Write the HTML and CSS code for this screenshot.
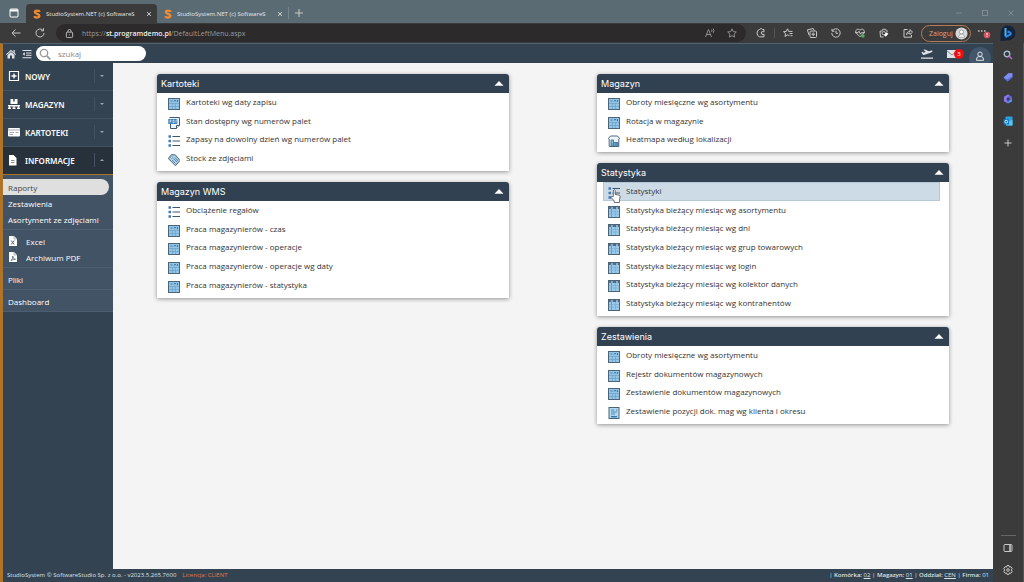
FILE: index.html
```html
<!DOCTYPE html>
<html lang="pl">
<head>
<meta charset="utf-8">
<title>StudioSystem.NET (c) SoftwareStudio</title>
<link rel="stylesheet" href="styles.css">
</head>
<body>
<svg class="sprite" aria-hidden="true">
  <symbol id="logo" viewBox="0 0 10 12"><path d="M8.500 3.200C7.800 1.200 2.200 1 2.200 3.600S8 5.500 8 8.300 2.500 11 1.400 8.700" fill="none" stroke="#f08a34" stroke-width="2.800"/></symbol>
  <symbol id="grid" viewBox="0 0 12 12"><rect x=".5" y=".5" width="11" height="11" fill="#93c5e8" stroke="#4b6478"/><path d="M2.500 3h2M6 3.500l1-1.500 1 1.500M9.500 2v2" stroke="#31648c" fill="none" stroke-width=".8"/><path d="M1 5.500h10M1 8.500h10M4.500 5v6M7.500 5v6" stroke="#6e9fc4" stroke-width=".7"/></symbol>
  <symbol id="table" viewBox="0 0 12 12"><rect x=".5" y=".5" width="11" height="11" fill="#99c9ea" stroke="#4b6478"/><path d="M1 2h10" stroke="#4a6f8e" stroke-width="2"/><path d="M3 2h2M8 2h2" stroke="#d9edf9"/><path d="M3.500 3v8" stroke="#6890b0" stroke-width=".8"/><path d="M1 5.500h10M1 8h10M7.500 3v8" stroke="#79a8ca" stroke-width=".6"/></symbol>
  <symbol id="list" viewBox="0 0 12 12"><path d="M.5 1.500h2.500M.5 6h2.500M.5 10.500h2.500" stroke="#3f79b4" stroke-width="2.500"/><path d="M4.500 1.500H12M4.500 6H12M4.500 10.500H12" stroke="#40566c" stroke-width="1"/></symbol>
  <symbol id="pdf" viewBox="0 0 12 12"><path d="M1.500 .5h10v8l-3 3h-6V7" fill="#e9f3fa" stroke="#42596c"/><path d="M8.500 11.500v-3h3" fill="#fff" stroke="#42596c"/><rect x=".3" y="2" width="9" height="5" fill="#3f7fb8"/><path d="M2 6V3h1v1.500H2M5 3v3h1V3zM8 6V3h1.500" fill="none" stroke="#e5f3ff" stroke-width=".6"/></symbol>
  <symbol id="tag" viewBox="0 0 12 12"><path d="M.2 4.500L3.500.5l4 .5L12 6.500 7.500 11.700z" fill="#a9cfe9" stroke="#42596c" stroke-width=".9"/><path d="M4 6l3.500 3.500M5.500 4.500L9 8M7 3.500L10 7" stroke="#456f91" stroke-width=".7"/><circle cx="3.500" cy="3.500" r=".9" fill="#fff" stroke="#42596c" stroke-width=".5"/></symbol>
  <symbol id="house" viewBox="0 0 12 12"><path d="M1.200 11.500V4L.3 3.500 2.500 1h7l2.200 2.500-.9.500v7.500z" fill="#eef6fb" stroke="#42596c" stroke-width=".9"/><path d="M3 11V5h2.500v2.500H10V11z" fill="#8fc0e2" stroke="#31648c" stroke-width=".8"/><path d="M5.500 7.500V11M8 7.500V11M3 9h7" stroke="#31648c" stroke-width=".6"/></symbol>
  <symbol id="report" viewBox="0 0 12 12"><rect x="1" y=".5" width="10" height="11" fill="#b3daf2" stroke="#4b6478"/><path d="M3 3h3.500M3 5h6M3 7h4M8 3h1.500" stroke="#39749f" stroke-width=".8"/><path d="M3 9.700h6" stroke="#397bb0" stroke-width="1.500"/></symbol>
  <symbol id="file" viewBox="0 0 8 10"><path d="M0 0h5l3 3v7H0z" fill="#fff"/><path d="M5 0v3h3" fill="none" stroke="#7b8b9a" stroke-width=".6"/></symbol>
  <symbol id="up" viewBox="0 0 10 5"><path d="M5 0l4.500 4.700H.5z" fill="currentColor"/></symbol>
</svg>

<div class="browser">
  <div class="tabstrip">
    <button class="tool workspace" aria-label="Karty"><svg viewBox="0 0 10 10"><rect x="1" y="1" width="8" height="8" rx="1"/><path d="M1 2.500h8" stroke-width="2"/></svg></button>
    <button class="tab active"><svg class="logo"><use href="#logo"/></svg><span class="tab-title">StudioSystem.NET (c) SoftwareS</span><svg class="close" viewBox="0 0 6 6"><path d="M1 1l4 4M5 1L1 5"/></svg></button>
    <button class="tab"><svg class="logo"><use href="#logo"/></svg><span class="tab-title">StudioSystem.NET (c) SoftwareS</span><svg class="close" viewBox="0 0 6 6"><path d="M1 1l4 4M5 1L1 5"/></svg></button>
    <button class="tool newtab" aria-label="Nowa karta"><svg viewBox="0 0 10 10"><path d="M5 1v8M1 5h8"/></svg></button>
    <div class="window-controls">
      <button class="tool" aria-label="Minimalizuj"><svg viewBox="0 0 10 10"><path d="M2 5h6"/></svg></button>
      <button class="tool" aria-label="Maksymalizuj"><svg viewBox="0 0 10 10"><rect x="2.500" y="2.500" width="5" height="5"/></svg></button>
      <button class="tool" aria-label="Zamknij"><svg viewBox="0 0 10 10"><path d="M2.500 2.500l5 5M7.500 2.500l-5 5"/></svg></button>
    </div>
  </div>

  <div class="toolbar">
    <button class="tool" aria-label="Wstecz"><svg viewBox="0 0 10 10"><path d="M9.500 5H1M4.500 1.500L1 5l3.500 3.500"/></svg></button>
    <button class="tool" aria-label="Odśwież"><svg viewBox="0 0 10 10"><path d="M9 5a4 4 0 1 1-1.200-2.900M8.500.3v2.500H6"/></svg></button>
    <div class="address">
      <svg class="lock" viewBox="0 0 10 10"><rect x="1.500" y="3.500" width="7" height="6" rx="1"/><path d="M3.300 3.500V2.200a1.700 1.700 0 0 1 3.400 0v1.300M5 6v1"/></svg>
      <span class="url">https://<b>st.programdemo.pl</b>/DefaultLeftMenu.aspx</span>
      <button class="tool dim" aria-label="Czytaj na głos"><svg viewBox="0 0 10 10"><path d="M.5 9L3.500 1.500 6.500 9M1.500 6.500h4M6.500 1.500q1 1.300 0 2.500M8.200.5q1.500 2.200 0 4.300"/></svg></button>
      <button class="tool dim" aria-label="Dodaj do ulubionych"><svg viewBox="0 0 10 10"><path d="M5 .8l1.300 2.800 3 .4-2.200 2.100.5 3L5 7.700 2.400 9.100l.5-3L.7 4l3-.4z"/></svg></button>
    </div>
    <button class="tool" aria-label="Rozszerzenia"><svg viewBox="0 0 10 10"><path d="M8 3V1.500H6.500A1.700 1.700 0 0 0 3.500 1.500Q1 2 1 5t2.500 3.800H8V7M8.500 3.700H7a1.400 1.400 0 1 0 0 2.700h1.500"/></svg></button>
    <span class="sep"></span>
    <button class="tool" aria-label="Ulubione"><svg viewBox="0 0 10 10"><path d="M6.500 7.700L4.500 6.900 2 8.500l.6-2.900L.5 3.700l2.800-.3L4.500.8l1.200 2.600H9.500M6.500 5.500h3M7.500 7.700h2"/></svg></button>
    <button class="tool" aria-label="Kolekcje"><svg viewBox="0 0 10 10"><path d="M2 7L.7 3 .5 1.800 6.300.5 7 2.300"/><rect x="3" y="3" width="6.500" height="6.500" rx="1"/><path d="M6.200 4.500v3.500M4.500 6.200H8"/></svg></button>
    <button class="tool" aria-label="Historia"><svg viewBox="0 0 10 10"><path d="M1.300 3A4.200 4.200 0 1 1 .8 5M1 .8v2.400h2.400M5 2.700V5.300h2"/></svg></button>
    <button class="tool" aria-label="Wydajność"><svg viewBox="0 0 10 10"><path d="M5 8.800L1 4.800C-.3 2 3-.2 5 2.200 7-.2 10.300 2 9 4.800z"/><path d="M0 4.700h3l1-1.500 1.500 3 .8-1.500H10"/><circle cx="8" cy="8" r="1.700" fill="#4cae68" stroke="none"/></svg></button>
    <button class="tool" aria-label="Zrzut"><svg viewBox="0 0 10 10"><path d="M4.500 9H1.500L1 3.200 3 3l.7-1.700h3L7.300 3l1.700.2"/><circle cx="4.800" cy="5.200" r="1.700"/><path d="M6 8l2.500-3" stroke="#fff" stroke-width="2.200"/></svg></button>
    <button class="tool" aria-label="Udostępnij"><svg viewBox="0 0 10 10"><path d="M4.500 1.500H1v7.700h7.500V7M3.500 6.700C3.700 4.300 5 3.500 7 3.500V1.500l2.500 2.700L7 6.500V5C5.500 5 4.500 5.500 3.500 6.700z"/></svg></button>
    <button class="login">Zaloguj<svg viewBox="0 0 14 14"><circle cx="7" cy="7" r="6.500" fill="#d9d9d9"/><circle cx="7" cy="5.300" r="2.200" fill="#fff" stroke="#888" stroke-width=".8"/><path d="M3.500 11q0-3 3.500-3t3.500 3z" fill="#fff" stroke="#888" stroke-width=".7"/></svg></button>
    <button class="tool more" aria-label="Więcej"><svg viewBox="0 0 14 12"><path d="M1 4h1.500M4 4h1.500M7 4h1.500" stroke-width="1.300"/><circle cx="10" cy="8" r="3.300" fill="#d05260" stroke="none"/><path d="M10 6v2.300M10 9.200v.8" stroke="#fff"/></svg></button>
    <button class="tool bing" aria-label="Bing"><svg viewBox="0 0 16 16"><path d="M.5 16V8A7.500 7.500 0 1 1 8 15.500z" fill="#14233a" stroke="none"/><path d="M5.500 3v8.500" stroke="#45b5f2" stroke-width="2"/><path d="M5.500 12l5-2.500q1-1.500-1-2.300L7.500 6.500" stroke="#2a86ea" stroke-width="2"/></svg></button>
  </div>

  <div class="workarea">
    <div class="app">
      <header class="topbar">
        <a href="#" class="top-icon" aria-label="Start"><svg viewBox="0 0 10 10"><path d="M0 5.300L5 .8l5 4.500-.7.7L5 2.200.7 6z"/><path d="M7.500 1h1.300v3L7.500 2.800zM1.500 6L5 3l3.500 3v3.500H6V6.500H4v3H1.500z"/></svg></a>
        <a href="#" class="top-icon" aria-label="Menu"><svg viewBox="0 0 10 10"><path d="M.5 1h9v1h-9zM4 3.500h5.500v1H4zM4 5.800h5.500v1H4zM.5 8.200h9v1h-9zM.5 5l2.300-1.800v3.600z"/></svg></a>
        <label class="search"><svg viewBox="0 0 12 12"><circle cx="5" cy="5" r="3.700"/><path d="M7.800 7.800l3.500 3.500" stroke-width="1.800"/></svg><input type="text" placeholder="szukaj" aria-label="szukaj"></label>
        <div class="top-actions">
          <a href="#" class="top-icon plane" aria-label="Odloty"><svg viewBox="0 0 12 10"><path d="M0 8.500h12v1.200H0zM.5 3l1-.3 1.200 1 2-.7L2.500.8 3.800.4l4 1.900 2.500-.8q1.500 0 1.200.9Q10.500 3.500 8 4.300L3 6q-1 .2-1.500-.7z"/></svg></a>
          <a href="#" class="top-icon mail" aria-label="Wiadomości"><svg viewBox="0 0 10 8"><path d="M0 0h10v8H0z"/><path d="M0 1l5 4 5-4" fill="none" stroke="#65737f" stroke-width=".8"/></svg><span class="badge">3</span></a>
          <a href="#" class="avatar" aria-label="Konto"><svg viewBox="0 0 10 10"><circle cx="5" cy="3.200" r="2.200"/><path d="M1.500 9.300q-.3-3.500 2-3.600h3q2.300.1 2 3.600z"/></svg></a>
        </div>
      </header>

      <div class="body">
        <nav class="sidebar">
          <button class="menu"><svg viewBox="0 0 12 12"><path d="M1.500 1.500h9v9h-9z" fill="none" stroke="#fff" stroke-width="1.200"/><path d="M6 3.500v5M3.500 6h5" stroke="#fff" stroke-width="1.400"/></svg><span>NOWY</span><i class="arrow"></i></button>
          <button class="menu"><svg viewBox="0 0 12 12"><path d="M2.500 1h2.700v2.500h1.500V1h2.800v5H2.500zM0 7h12v1.500H0zM0 9.500h3V11H0zM4.500 9.500h3V11h-3zM9 9.500h3V11H9zM1 8h1v2H1zM5.500 8h1v2h-1zM10 8h1v2h-1z" fill="#fff"/></svg><span>MAGAZYN</span><i class="arrow"></i></button>
          <button class="menu"><svg viewBox="0 0 12 12"><rect y="2" width="12" height="8.500" rx="1" fill="#fff"/><path d="M0 4h12M1.500 6.500H6M1.500 8.500H5M7.500 6.500h3" stroke="#8997a3" stroke-width=".8"/></svg><span>KARTOTEKI</span><i class="arrow"></i></button>
          <button class="menu open"><svg viewBox="0 0 12 12"><path d="M1 1h4.500L8.500 4v7.500H1z" fill="#fff"/><path d="M3 6.500h3.500M3 8.500h3.500" stroke="#65717c" stroke-width=".8"/></svg><span>INFORMACJE</span><i class="arrow"></i></button>
          <div class="submenu">
            <div class="group">
              <a href="#" class="selected">Raporty</a>
              <a href="#">Zestawienia</a>
              <a href="#">Asortyment ze zdjęciami</a>
            </div>
            <div class="group">
              <a href="#" class="with-icon"><svg viewBox="0 0 8 10"><use href="#file"/><path d="M2.200 4.500l3 4M5.200 4.500l-3 4" stroke="#44576a" stroke-width=".9"/></svg>Excel</a>
              <a href="#" class="with-icon"><svg viewBox="0 0 8 10"><use href="#file"/><path d="M2 8.500q2-2 1.700-4.500Q4 7 6.500 7.300 4 7 2 8.500" fill="none" stroke="#44576a" stroke-width=".7"/></svg>Archiwum PDF</a>
            </div>
            <div class="group"><a href="#">Pliki</a></div>
            <div class="group"><a href="#">Dashboard</a></div>
          </div>
        </nav>

        <main class="content">
          <div class="column">
            <section class="panel">
              <h2>Kartoteki<svg><use href="#up"/></svg></h2>
              <ul>
                <li><a href="#"><svg><use href="#grid"/></svg>Kartoteki wg daty zapisu</a></li>
                <li><a href="#"><svg><use href="#pdf"/></svg>Stan dostępny wg numerów palet</a></li>
                <li><a href="#"><svg><use href="#list"/></svg>Zapasy na dowolny dzień wg numerów palet</a></li>
                <li><a href="#"><svg><use href="#tag"/></svg>Stock ze zdjęciami</a></li>
              </ul>
            </section>
            <section class="panel">
              <h2>Magazyn WMS<svg><use href="#up"/></svg></h2>
              <ul>
                <li><a href="#"><svg><use href="#list"/></svg>Obciążenie regałów</a></li>
                <li><a href="#"><svg><use href="#grid"/></svg>Praca magazynierów - czas</a></li>
                <li><a href="#"><svg><use href="#grid"/></svg>Praca magazynierów - operacje</a></li>
                <li><a href="#"><svg><use href="#grid"/></svg>Praca magazynierów - operacje wg daty</a></li>
                <li><a href="#"><svg><use href="#grid"/></svg>Praca magazynierów - statystyka</a></li>
              </ul>
            </section>
          </div>
          <div class="column">
            <section class="panel">
              <h2>Magazyn<svg><use href="#up"/></svg></h2>
              <ul>
                <li><a href="#"><svg><use href="#grid"/></svg>Obroty miesięczne wg asortymentu</a></li>
                <li><a href="#"><svg><use href="#grid"/></svg>Rotacja w magazynie</a></li>
                <li><a href="#"><svg><use href="#house"/></svg>Heatmapa według lokalizacji</a></li>
              </ul>
            </section>
            <section class="panel">
              <h2>Statystyka<svg><use href="#up"/></svg></h2>
              <ul>
                <li><a href="#" class="hover"><svg><use href="#list"/></svg>Statystyki<svg class="cursor" viewBox="0 0 10 13"><path d="M3 7V1.300q1-1.100 1.700 0V5l3.800.8q1 .3.800 1.500L8.700 10v2.500H3.800V10.800L.8 8q0-1.500 1.200-1z" fill="#fff" stroke="#444" stroke-width=".7"/></svg></a></li>
                <li><a href="#"><svg><use href="#table"/></svg>Statystyka bieżący miesiąc wg asortymentu</a></li>
                <li><a href="#"><svg><use href="#table"/></svg>Statystyka bieżący miesiąc wg dni</a></li>
                <li><a href="#"><svg><use href="#table"/></svg>Statystyka bieżący miesiąc wg grup towarowych</a></li>
                <li><a href="#"><svg><use href="#table"/></svg>Statystyka bieżący miesiąc wg login</a></li>
                <li><a href="#"><svg><use href="#table"/></svg>Statystyka bieżący miesiąc wg kolektor danych</a></li>
                <li><a href="#"><svg><use href="#table"/></svg>Statystyka bieżący miesiąc wg kontrahentów</a></li>
              </ul>
            </section>
            <section class="panel">
              <h2>Zestawienia<svg><use href="#up"/></svg></h2>
              <ul>
                <li><a href="#"><svg><use href="#grid"/></svg>Obroty miesięczne wg asortymentu</a></li>
                <li><a href="#"><svg><use href="#grid"/></svg>Rejestr dokumentów magazynowych</a></li>
                <li><a href="#"><svg><use href="#grid"/></svg>Zestawienie dokumentów magazynowych</a></li>
                <li><a href="#"><svg><use href="#report"/></svg>Zestawienie pozycji dok. mag wg klienta i okresu</a></li>
              </ul>
            </section>
          </div>
        </main>
      </div>

      <footer class="statusbar">
        <span>StudioSystem © SoftwareStudio Sp. z o.o. - v2023.5.265.7600</span>
        <span class="license">Licencja: CLIENT</span>
        <span class="context">| <b>Komórka:</b> <a href="#">02</a> | <b>Magazyn:</b> <a href="#">01</a> | <b>Oddział:</b> <a href="#">CEN</a> | <b>Firma:</b> 01</span>
      </footer>
    </div>

    <aside class="edgebar">
      <button class="tool" aria-label="Szukaj"><svg viewBox="0 0 10 10"><circle cx="4" cy="4" r="2.800" stroke="#a9c4d8" stroke-width="1.300"/><path d="M6 6l3 3" stroke="#c25bd0" stroke-width="1.700"/></svg></button>
      <button class="tool" aria-label="Zakupy"><svg viewBox="0 0 10 10"><path d="M.5 5.500L5.500 1l4 .3v4L4.500 9.500z" fill="#7f8df0" stroke="none"/><path d="M.5 5.500L4.500 9.500 9.500 5.300V4L4.500 7.500z" fill="#5167dc" stroke="none"/></svg></button>
      <button class="tool" aria-label="Microsoft 365"><svg viewBox="0 0 10 10"><path d="M5 .5l4 2.200v4.600L5 9.500 1 7.300V2.700z" fill="#6562c9" stroke="none"/><path d="M1 3v4l4 2.500L3.500 6V4L6.500 1.300 5 .5z" fill="#8f77e6" stroke="none"/><circle cx="5.200" cy="5" r="1.500" fill="#2b3a6b" stroke="none"/><path d="M6 7l3-1.800v2L5 9.500z" fill="#4ba2ec" stroke="none"/></svg></button>
      <button class="tool" aria-label="Outlook"><svg viewBox="0 0 10 10"><rect x="2.500" y=".5" width="7" height="9" rx="1" fill="#29a0e0" stroke="none"/><path d="M3 6l6.500-2v5.500H3z" fill="#58c5f2" stroke="none"/><rect x=".5" y="3" width="5.500" height="5.500" rx=".7" fill="#1177c4" stroke="none"/><circle cx="3.200" cy="5.700" r="1.400" stroke="#fff" stroke-width=".8"/></svg></button>
      <button class="tool" aria-label="Dodaj"><svg viewBox="0 0 10 10"><path d="M5 1.500v7M1.500 5h7"/></svg></button>
      <span class="edge-divider"></span>
      <button class="tool" aria-label="Pasek boczny"><svg viewBox="0 0 10 10"><rect x="1" y="1.500" width="8" height="7" rx="1"/><path d="M7 1.500v7" stroke-width="1.600"/></svg></button>
      <button class="tool" aria-label="Ustawienia"><svg viewBox="0 0 10 10"><path d="M4 .6h2l.4 1.500 1.500-.4 1.300 1.800L8.300 5l.9 1.500-1.300 1.800-1.500-.4L6 9.400H4l-.4-1.500-1.500.4L.8 6.500 1.700 5 .8 3.500l1.300-1.800 1.500.4z"/><circle cx="5" cy="5" r="1.300"/></svg></button>
    </aside>
  </div>
</div>
</body>
</html>
```

FILE: styles.css
```css
* { box-sizing: border-box; }

body {
  margin: 0;
  font-family: "Open Sans", "Noto Sans", sans-serif;
  font-size: 8px;
  color: #333;
}

button {
  margin: 0;
  padding: 0;
  border: 0;
  background: none;
  color: inherit;
  font: inherit;
}

a { color: inherit; text-decoration: none; }

svg { display: block; flex: none; }

.sprite { position: absolute; width: 0; height: 0; }

.browser {
  display: flex;
  flex-direction: column;
  min-height: 100vh;
  background: #3b3b3b;
}

/* Browser chrome */
.tool {
  display: flex;
  flex: none;
  align-items: center;
  justify-content: center;
  width: 24px;
  height: 20px;
  color: #c8c8c8;
}

.tool svg {
  width: 10px;
  height: 10px;
  fill: none;
  stroke: currentColor;
}

.tabstrip {
  display: flex;
  align-items: flex-end;
  height: 23px;
  padding: 0 1px 0 2px;
  background: #5a6b73;
}

.tabstrip .workspace { color: #fff; }

.tab {
  display: flex;
  align-items: center;
  gap: 5px;
  width: 131px;
  height: 19px;
  padding: 0 5px 0 7px;
  border-radius: 4px 4px 0 0;
  font-size: 6px;
  color: #e4e8ea;
}

.tab.active { background: #3b3b3b; }

.logo { width: 8px; height: 10px; }

.tab-title {
  flex: 1;
  white-space: nowrap;
  text-align: left;
}

.close { width: 6px; height: 6px; fill: none; stroke: currentColor; stroke-width: .8; }

.newtab {
  width: 20px;
  height: 12px;
  margin-bottom: 4px;
  border-left: 1px solid #78868c;
}

.window-controls { display: flex; gap: 2px; margin-left: auto; }

.window-controls .tool { color: #7e8b91; }

.toolbar {
  display: flex;
  align-items: center;
  height: 20px;
  padding: 0 4px;
}

.address {
  display: flex;
  flex: 1;
  align-items: center;
  min-width: 0;
  height: 18px;
  margin: 0 3px 0 4px;
  padding: 0 3px 0 9px;
  border-radius: 9px;
  background: #2c2a2a;
}

.lock { width: 9px; height: 9px; fill: none; stroke: #c8c8c8; }

.url {
  flex: 1;
  margin-left: 8px;
  font-size: 7px;
  color: #9a9a9a;
}

.url b { font-weight: 600; color: #f0f0f0; }

.address .tool { width: 22px; }

.address .dim { color: #8f8f8f; }

.sep { width: 1px; height: 10px; margin: 0 1px; background: #555; }

.login {
  display: flex;
  align-items: center;
  justify-content: space-between;
  width: 50px;
  height: 17px;
  margin: 0 1px;
  padding: 0 2px 0 7px;
  border: 1px solid #b07b5c;
  border-radius: 9px;
  font-size: 7px;
  color: #e0a27a;
}

.login svg { width: 13px; height: 13px; }

.more svg { width: 14px; height: 12px; }

.bing svg { width: 16px; height: 16px; }

.workarea { display: flex; flex: 1; }

.edgebar {
  display: flex;
  flex-direction: column;
  align-items: center;
  gap: 2px;
  width: 31px;
  padding: 2px 0;
  border-right: 1px solid #555;
}

.edge-divider { width: 15px; height: 1px; margin-top: auto; background: #666; }

/* Application */
.app {
  display: flex;
  flex: 1;
  flex-direction: column;
  min-width: 0;
  border-top: 1px solid #4f6470;
  border-left: 3px solid #b07428;
  background: #334351;
}

.topbar {
  display: flex;
  align-items: center;
  height: 19px;
}

.top-icon {
  display: flex;
  align-items: center;
  justify-content: center;
  width: 16px;
}

.top-icon svg { width: 10px; height: 10px; fill: #dfe4e8; }

.search {
  display: flex;
  align-items: center;
  gap: 7px;
  width: 110px;
  height: 15px;
  margin-left: 1px;
  padding: 0 3px;
  border-radius: 8px;
  background: #fff;
}

.search svg { width: 12px; height: 12px; fill: none; stroke: #999; stroke-width: 1.300; }

.search input {
  flex: 1;
  min-width: 0;
  padding: 0;
  border: 0;
  outline: 0;
  background: none;
  font: inherit;
  color: #444;
}

.search input::placeholder { color: #888; }

.top-actions {
  display: flex;
  align-items: center;
  gap: 9px;
  height: 19px;
  margin-left: auto;
  padding-right: 2px;
  overflow: hidden;
}

.plane svg { width: 12px; height: 10px; }

.mail { position: relative; }

.mail svg { width: 10px; height: 8px; }

.badge {
  position: absolute;
  top: -1px;
  right: -4px;
  width: 10px;
  height: 10px;
  border-radius: 5px;
  background: #f10d12;
  font-size: 6px;
  line-height: 10px;
  text-align: center;
  color: #fff;
}

.avatar {
  display: flex;
  justify-content: center;
  align-self: flex-start;
  width: 22px;
  height: 22px;
  margin-top: 3px;
  padding-top: 4px;
  border-radius: 11px;
  background: #43566a;
}

.avatar svg { width: 10px; height: 10px; fill: none; stroke: #dfe4e8; }

.body { display: flex; flex: 1; }

.sidebar { width: 110px; color: #fff; }

.menu {
  display: flex;
  align-items: center;
  width: 100%;
  height: 28px;
  padding: 0 7px 1px 5px;
  border-bottom: 1px solid #435361;
  font-family: "Noto Sans", sans-serif;
  font-weight: 600;
  text-align: left;
}

.menu svg { width: 12px; height: 12px; margin-right: 5px; }

.menu span { flex: 1; }

.arrow {
  width: 12px;
  height: 14px;
  border-left: 1px solid #435361;
}

.arrow::after {
  content: "";
  display: block;
  width: 0;
  margin: 6px 0 0 5px;
  border: 2px solid transparent;
  border-top-color: #9aa5ae;
  border-bottom: 0;
}

.menu.open { border-bottom-color: #b07428; background: #27313b; }

.menu.open .arrow::after { border-top: 0; border-bottom: 2px solid #9aa5ae; }

.submenu { padding-top: 1px; background: #425365; }

.group {
  display: flex;
  flex-direction: column;
  padding: 3px 4px 2px 0;
  border-bottom: 1px solid #4d5e6f;
}

.group a {
  display: flex;
  align-items: center;
  height: 16px;
  padding-left: 5px;
  white-space: nowrap;
}

.group .selected { border-radius: 0 8px 8px 0; background: #dfdfdf; color: #444; }

.group .with-icon { gap: 9px; padding-left: 6px; }

.with-icon svg { width: 8px; height: 10px; }

.content {
  display: grid;
  flex: 1;
  grid-template-columns: 1fr 1fr;
  align-items: start;
  padding: 11px 0;
  background: #f4f4f4;
}

.column { display: grid; gap: 11px; padding: 0 44px; }

.panel {
  padding-bottom: 3px;
  border-radius: 3px 3px 0 0;
  background: #fff;
  box-shadow: 0 1px 4px rgba(0, 0, 0, .4);
}

.panel h2 {
  display: flex;
  align-items: center;
  justify-content: space-between;
  height: 19px;
  margin: 0;
  padding: 0 5px 0 4px;
  border-radius: 3px 3px 0 0;
  background: #314151;
  font-family: Inter, sans-serif;
  font-size: 9px;
  font-weight: 400;
  color: #fff;
}

.panel h2 svg { width: 10px; height: 5px; margin-bottom: 1px; }

.panel ul { margin: 0; padding: 0 9px 0 6px; list-style: none; }

.panel li { height: 19px; }

.panel li:nth-child(3n) { height: 18px; }

.panel li a {
  position: relative;
  display: flex;
  align-items: center;
  gap: 6px;
  height: 100%;
  padding: 0 5px 3px 4px;
  border: 1px solid transparent;
}

.panel li svg { width: 12px; height: 12px; margin-top: 5px; }

.panel li .hover { border-color: #b5c8d6; background: #ccdbe6; }

.panel li .cursor {
  position: absolute;
  top: 1px;
  left: 6px;
  width: 11px;
  height: 14px;
}

.statusbar {
  display: flex;
  align-items: center;
  gap: 6px;
  height: 13px;
  padding: 0 4px 1px;
  font-size: 6px;
  color: #dbe2e8;
}

.license { color: #e07a45; }

.context { margin-left: auto; }

.context b { font-weight: 600; }

.context a { text-decoration: underline; }
```
